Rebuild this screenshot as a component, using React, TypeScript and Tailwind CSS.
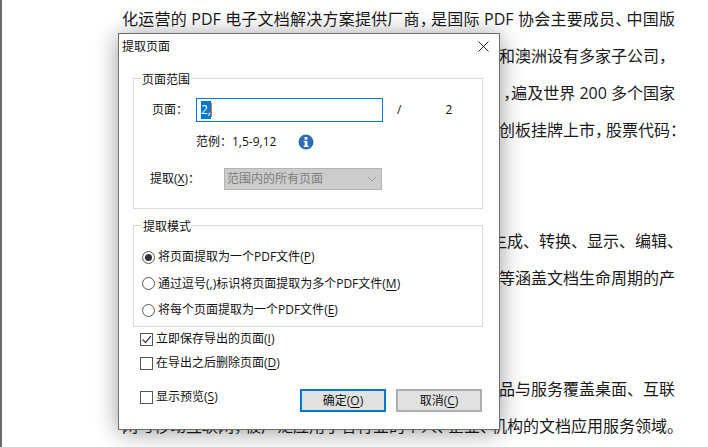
function Comp({ c }: { c: string }) {
  return <span className="tracking-[-5px]">{c}</span>;
}

function Tight({ c }: { c: string }) {
  return <span className="tracking-[-8px]">{c}</span>;
}

function Key({ k }: { k: string }) {
  return (
    <>
      (<span className="underline underline-offset-2">{k}</span>)
    </>
  );
}

function Radio({ on, children }: { on?: boolean; children: React.ReactNode }) {
  return (
    <div className="flex h-[26.5px] items-center gap-[3px]">
      <div className="flex h-[13px] w-[13px] items-center justify-center rounded-full border border-[#555]">
        {on && <div className="h-[7px] w-[7px] rounded-full bg-[#333]" />}
      </div>
      <span>{children}</span>
    </div>
  );
}

function Check({ on, children }: { on?: boolean; children: React.ReactNode }) {
  return (
    <div className="flex h-[24px] items-center gap-[3px]">
      <div className="flex h-[13px] w-[13px] items-center justify-center border border-[#555]">
        {on && (
          <svg width="11" height="11" viewBox="0 0 11 11" fill="none">
            <path d="M1.5 5.5 L4.5 8.5 L10 2" stroke="#444" strokeWidth="1.2" />
          </svg>
        )}
      </div>
      <span>{children}</span>
    </div>
  );
}

export default function App() {
  return (
    <div className="relative h-[447px] w-[708px] overflow-hidden border-l-2 border-[#6e6e6e] bg-white font-['Open_Sans','Noto_Sans_CJK_SC',sans-serif] text-[#1a1a1a]">
      {/* Document behind */}
      <div className="ml-[120px] w-[553px] whitespace-nowrap text-[16px] leading-[38px]">
        <div className="h-[37px] [text-align-last:justify]">
          化运营的 PDF 电子文档解决方案提供厂商<Comp c="，" />是国际 PDF 协会主要成员<Comp c="、" />中国版
        </div>
        <div className="h-[37px] pr-[8px] text-right">
          和澳洲设有多家子公司<Tight c="，" />
        </div>
        <div className="h-[37px] text-right">
          <Tight c="，" />遍及世界 200 多个国家
        </div>
        <div className="-mr-[3px] h-[37px] text-right">
          创板挂牌上市<Comp c="，" />股票代码<Tight c="：" />
        </div>
        <div className="h-[74px]" />
        <div className="h-[37px] text-right">
          生成、转换、显示、编辑<Tight c="、" />
        </div>
        <div className="h-[37px] text-right">等涵盖文档生命周期的产</div>
        <div className="h-[74px]" />
        <div className="h-[37px] text-right">产品与服务覆盖桌面、互联</div>
        <div className="h-[37px]">
          网与移动互联网<Comp c="，" />被广泛应用于各行业的个人<Comp c="、" />企业<Comp c="、" />机构的文档应用服务领域。
        </div>
      </div>

      {/* Dialog */}
      <div className="absolute left-[116px] top-[33px] h-[397px] w-[382px] border border-[#6e6e6e] bg-white text-[12px] leading-[18px] text-[#111] shadow-[0_2px_22px_rgba(0,0,0,0.4)]">
        <div className="flex h-[33px] items-start justify-between pl-[3px] pr-[10px] pt-[4px]">
          <span>提取页面</span>
          <svg className="mt-[3px]" width="11" height="11" viewBox="0 0 11 11" stroke="#222" strokeWidth="1">
            <path d="M0.5 0.5 L10.5 10.5 M10.5 0.5 L0.5 10.5" />
          </svg>
        </div>

        <fieldset className="ml-[14px] mr-[16px] h-[142px] border border-[#dcdcdc] pl-[7px]">
          <legend className="px-[1px] pt-[4px]">页面范围</legend>
          <div className="mt-[9px] flex items-center">
            <span className="ml-[11px] w-[44px]">页面：</span>
            <div className="flex h-[24px] w-[187px] items-center border border-[#0078d7] pl-[4px]">
              <span className="bg-[#0078d7] text-white">2,</span>
              <span className="h-[14px] w-px bg-[#e8710a]" />
            </div>
            <span className="ml-[14px]">/</span>
            <span className="ml-[44px]">2</span>
          </div>
          <div className="ml-[55px] mt-[11px] flex items-center">
            <span>范例：1,5-9,12</span>
            <svg className="ml-[22px]" width="16" height="16" viewBox="0 0 16 16">
              <circle cx="8" cy="8" r="7.5" fill="#2c6eb5" />
              <rect x="6.6" y="3" width="2.8" height="2.6" fill="#fff" />
              <path d="M5.8 6.8 H9.4 V11.6 H10.4 V13 H5.8 V11.6 H6.8 V8.2 H5.8 Z" fill="#fff" />
            </svg>
          </div>
          <div className="mt-[17px] flex items-center">
            <span className="ml-[9px] w-[74px]">
              提取
              <Key k="X" />：
            </span>
            <div className="flex h-[22px] w-[158px] items-center justify-between border border-[#b4b4b4] bg-[#cccccc] pl-[2px] pr-[4px] text-[#808080]">
              <span>范围内的所有页面</span>
              <svg width="10" height="6" viewBox="0 0 10 6" fill="none" stroke="#a2a2a2">
                <path d="M1 1 L5 5 L9 1" />
              </svg>
            </div>
          </div>
        </fieldset>

        <fieldset className="ml-[14px] mr-[16px] mt-[5px] h-[113px] border border-[#dcdcdc] pl-[8px]">
          <legend className="px-[1px] pt-[4px]">提取模式</legend>
          <div className="mt-[8px]">
            <Radio on>
              将页面提取为一个PDF文件
              <Key k="P" />
            </Radio>
            <Radio>
              通过逗号(,)标识将页面提取为多个PDF文件
              <Key k="M" />
            </Radio>
            <Radio>
              将每个页面提取为一个PDF文件
              <Key k="E" />
            </Radio>
          </div>
        </fieldset>

        <div className="ml-[21px]">
          <Check on>
            立即保存导出的页面
            <Key k="I" />
          </Check>
          <Check>
            在导出之后删除页面
            <Key k="D" />
          </Check>
        </div>

        <div className="ml-[21px] mr-[17px] mt-[10px] flex items-start justify-between">
          <Check>
            显示预览
            <Key k="S" />
          </Check>
          <div className="flex gap-[10px] pt-[4px]">
            <div className="flex h-[23px] w-[86px] items-center justify-center border-2 border-[#0078d7] bg-[#e1e1e1]">
              确定
              <Key k="O" />
            </div>
            <div className="flex h-[23px] w-[86px] items-center justify-center border-2 border-[#adadad] bg-[#e1e1e1]">
              取消
              <Key k="C" />
            </div>
          </div>
        </div>
      </div>
    </div>
  );
}
